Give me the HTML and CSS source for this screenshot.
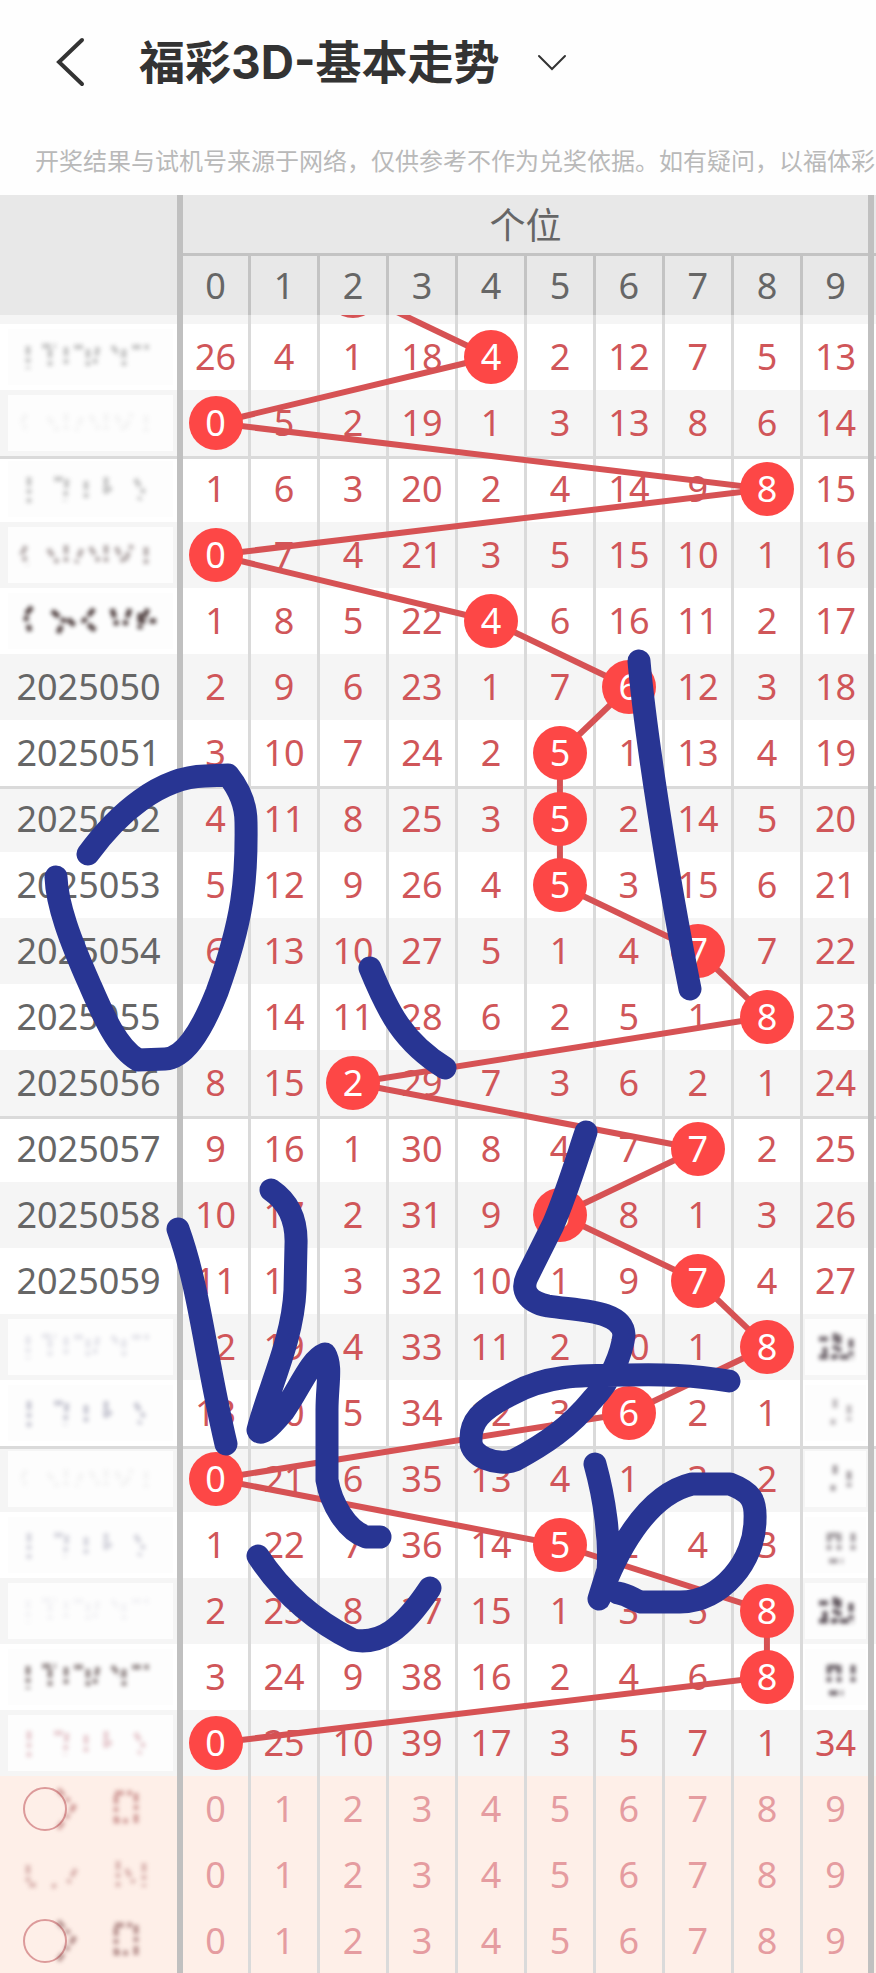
FILE: index.html
```html
<!DOCTYPE html>
<html lang="zh-CN">

<head>
    <meta charset="UTF-8">
    <meta name="viewport" content="width=device-width, initial-scale=1.0">
    <title>福彩3D-基本走势</title>
    <link rel="stylesheet" href="styles.css">
</head>

<body>
    <header class="topbar">
        <button type="button" class="back" aria-label="返回">
            <svg width="32" height="52" viewBox="0 0 32 52"><path d="M27 4 L4 26 L27 48"/></svg>
        </button>
        <h1>福彩3D-基本走势</h1>
        <button type="button" class="more" aria-label="切换走势">
            <svg width="32" height="20" viewBox="0 0 32 20"><path d="M4 4 L17 17 L30 4"/></svg>
        </button>
    </header>
    <p class="notice">开奖结果与试机号来源于网络，仅供参考不作为兑奖依据。如有疑问，以福体彩</p>

    <main class="chart" id="chart">
        <table>
            <colgroup>
                <col class="col-issue">
                <col class="col-first">
                <col span="8">
                <col class="col-last">
                <col class="col-next">
            </colgroup>
            <thead>
                <tr class="head-group">
                    <th rowspan="2" class="issue" aria-label="期号"></th>
                    <th colspan="10" class="last">个位</th>
                    <th></th>
                </tr>
                <tr class="head-num" id="headNum"></tr>
            </thead>
            <tbody id="rows"></tbody>
        </table>
        <svg class="lines" id="lines" aria-hidden="true"></svg>
        <svg class="pen" viewBox="0 195 876 1778" preserveAspectRatio="none" aria-hidden="true">
            <path d="M88 854 C118 813 160 777 205 776 L228 775 C240 790 246 805 246 822 C247 880 243 920 217 992 C200 1035 183 1058 165 1059 L138 1060 C117 1048 103 1015 90 985 C70 940 57 905 56 877"/>
            <path d="M639 661 C645 730 668 880 690 989"/>
            <path d="M370 968 C388 1012 403 1042 445 1068"/>
            <path d="M178 1229 C200 1290 205 1355 226 1444"/>
            <path d="M271 1190 C290 1203 297 1222 296 1245 L295 1290 C293 1340 268 1390 258 1430 C260 1436 268 1430 283 1412 C300 1388 310 1360 325 1354 C332 1366 327 1385 327 1410 L327 1480 C331 1503 346 1530 366 1537 L380 1537"/>
            <path d="M258 1556 C283 1594 315 1621 353 1640 C380 1645 402 1630 430 1588"/>
            <path d="M586 1132 C575 1165 566 1195 553 1225 L527 1277 C521 1290 527 1302 548 1306 C580 1311 623 1310 624 1335 C622 1352 612 1380 592 1400 C570 1427 545 1444 515 1460 C497 1467 470 1456 471 1441 C470 1422 480 1410 510 1395 C545 1375 580 1375 625 1375 C665 1374 690 1375 729 1381"/>
            <path d="M595 1464 C605 1500 610 1540 608 1570 L599 1599 C615 1555 645 1495 692 1484 L730 1484 C751 1492 756 1500 755 1520 C755 1560 722 1602 680 1602 L641 1602 C633 1600 630 1595 618 1593"/>
        </svg>
    </main>

    <script src="chart.js"></script>
</body>

</html>
```

FILE: styles.css
```css
* {
    box-sizing: border-box;
}

body {
    font-family: "Noto Sans", "Noto Sans CJK SC", sans-serif;
    background-color: #fefefe;
    color: #666;
    margin: 0;
}

.topbar {
    display: flex;
    align-items: center;
    height: 124px;
    padding-left: 55px;
}

.topbar button {
    display: flex;
    padding: 0;
    border: none;
    background: none;
    cursor: pointer;
}

.topbar svg {
    fill: none;
    stroke: #333;
    stroke-width: 4;
    stroke-linecap: round;
}

.topbar .more svg {
    stroke-width: 2;
}

h1 {
    margin: 0 36px 0 52px;
    font-family: Inter, "Noto Sans CJK SC", sans-serif;
    font-size: 46px;
    line-height: 60px;
    font-weight: 700;
    color: #333;
}

.notice {
    margin: 0;
    padding-left: 35px;
    font-family: "Noto Sans CJK SC", sans-serif;
    font-size: 24px;
    line-height: 71px;
    color: #b9b9b9;
    white-space: nowrap;
    overflow: hidden;
}

.chart {
    position: relative;
}

table {
    width: 100%;
    table-layout: fixed;
    border-collapse: separate;
    border-spacing: 0;
}

.col-issue {
    width: 183px;
}

.col-first {
    width: 68px;
}

.col-last {
    width: 71px;
}

.col-next {
    width: 2px;
}

th,
td {
    padding: 0;
    font-size: 36px;
    line-height: 48px;
    font-weight: 400;
    text-align: center;
    border-right: 3px solid #dadada;
}

.issue,
.last {
    border-right: 6px solid #c0c0c0;
}

th:last-child,
td:last-child {
    border-right: none;
}

thead th {
    background-color: #e8e8e8;
    border-right-color: #c3c3c3;
}

.head-group th {
    height: 61px;
    box-shadow: inset 0 -3px #c3c3c3;
}

.head-group .issue {
    box-shadow: none;
}

.head-num th {
    height: 59px;
}

tbody tr {
    background-color: #fff;
    color: #d05659;
}

tbody th,
tbody td {
    height: 66px;
}

tbody th {
    color: #666;
}

tbody tr.odd {
    background-color: #f5f5f5;
}

tbody tr.peek th,
tbody tr.peek td {
    height: 9px;
}

tbody tr:last-child th,
tbody tr:last-child td {
    height: 65px;
}

tr.divide th,
tr.divide td {
    box-shadow: inset 0 3px #dadada;
}

tbody tr.guess {
    background-color: #feefe8;
    color: #e59ca0;
}

.ball {
    position: relative;
    z-index: 2;
    display: block;
    width: 54px;
    height: 54px;
    margin: 0 auto;
    border-radius: 50%;
    line-height: 54px;
    background-color: #fd4746;
    color: #fff;
}

.lines,
.pen {
    position: absolute;
    left: 0;
    width: 100%;
    pointer-events: none;
}

.lines {
    z-index: 1;
    overflow: hidden;
}

.lines line {
    stroke: #d65254;
    stroke-width: 6;
}

.lines circle {
    fill: #d65254;
}

.pen {
    z-index: 3;
    top: 0;
    height: 100%;
    fill: none;
    stroke: #283593;
    stroke-width: 23;
    stroke-linecap: round;
    stroke-linejoin: round;
}

/* masked issue numbers and values */
.mask {
    display: block;
    height: 56px;
    margin: 0 4px 0 8px;
    background-color: #fdfdfd;
}

td .mask {
    margin: 0 2px;
}

.guess .mask {
    background: none;
}

.mask svg {
    display: block;
    width: 100%;
    height: 56px;
    fill: none;
}

.mask .blot {
    stroke: currentColor;
    stroke-width: 5;
    stroke-dasharray: 9 3 5 4;
    filter: blur(2px);
}

.mask .ring {
    stroke: #dc9a9a;
    stroke-width: 2;
}
```

FILE: chart.js
```js
const hits = [4, 0, 8, 0, 4, 6, 5, 5, 5, 7, 8, 2, 7, 5, 7, 8, 6, 0, 5, 8, 8, 0];
const misses = [25, 3, 0, 17, 0, 1, 11, 6, 4, 12];
const firstIssue = 2025045;
const dividers = [2, 7, 12, 17];
const blankCell = { row: 10, col: 0 };

// masked rows: strength and tone of the blot in the issue column
const masked = {
    0: [0.4, '#777', 0], 1: [0.06, '#777', 2], 2: [0.4, '#777', 1], 3: [0.45, '#655', 2], 4: [0.95, '#433', 3],
    15: [0.15, '#668', 0], 16: [0.3, '#557', 1], 17: [0.06, '#777', 2], 18: [0.22, '#557', 1],
    19: [0.06, '#668', 0], 20: [0.6, '#544', 0], 21: [0.25, '#a45', 1],
    22: [0.5, '#a55', 4], 23: [0.4, '#a66', 5], 24: [0.6, '#855', 4]
};
const maskedLast = { 15: [0.8, 0], 16: [0.35, 1], 17: [0.5, 1], 18: [0.5, 2], 19: [0.9, 0], 20: [0.8, 2] };

const blots = [
    'M20 17V40M34 17h14M42 20V39M58 18V38M66 18h10M80 20V38M90 18l-4 20M104 17l8 10M116 20V38M124 18h20',
    'M21 16V42M46 18h12M59 18l-2 22M78 20V38M98 16V36M95 28h12M127 18l8 12l-4 9',
    'M18 19l-4 8l6 11M40 22l10 14M58 18V38M74 22l-6 14M82 20l10 16M98 18V38M108 20l8 16l8 -18M138 20V38',
    'M24 14L17 22L22 38M44 18l12 10l-6 12M60 26l8 8M86 16l-10 12l12 10M104 16l6 20M122 16l-6 18M132 20v16M140 16l-6 12h14',
    'M50 8l16 18l-16 22M107 12h20M108 14V40h14M128 12V44',
    'M20 18V38h8M44 38l4 2M68 22l-8 14M110 14V40M118 22l8 14M136 16V40'
];
const lastBlots = [
    'M14 20h10M14 38h34M30 14V40M34 16V38M46 20v16M20 28v8',
    'M30 14V26M28 34v6M44 20V36',
    'M24 16v20M34 16v20M24 18h10M24 44h14M48 16v18'
];

function blot(d, opacity, color, width, ring) {
    const circle = ring ? '<circle class="ring" cx="37" cy="28" r="21"/>' : '';
    return `<span class="mask" aria-hidden="true"><svg viewBox="0 0 ${width} 56">${circle}
        <path class="blot" d="${d}" opacity="${opacity}" color="${color}"/></svg></span>`;
}

const tbody = document.getElementById('rows');

function addRow(className, head, cells) {
    const tr = document.createElement('tr');
    tr.className = className;
    tr.innerHTML = `<th class="issue" scope="row">${head}</th>` +
        cells.map((c, i) => `<td${i === 9 ? ' class="last"' : ''}>${c}</td>`).join('') + '<td></td>';
    tbody.appendChild(tr);
}

document.getElementById('headNum').innerHTML =
    misses.map((m, i) => `<th scope="col"${i === 9 ? ' class="last"' : ''}>${i}</th>`).join('') + '<th></th>';

// lower edge of the row that is scrolled under the header
addRow('peek odd', '', Array(10).fill(''));

hits.forEach((hit, row) => {
    const cells = misses.map((m, i) => {
        misses[i] = i === hit ? 0 : m + 1;
        if (i === hit) return `<span class="ball">${i}</span>`;
        if (row === blankCell.row && i === blankCell.col) return '';
        if (i === 9 && maskedLast[row]) {
            const [opacity, shape] = maskedLast[row];
            return blot(lastBlots[shape], opacity, '#534850', 61);
        }
        return misses[i];
    });
    const m = masked[row];
    const head = m ? blot(blots[m[2]], m[0], m[1], 165) : firstIssue + row;
    const names = [row % 2 ? 'odd' : '', dividers.includes(row) ? 'divide' : ''];
    addRow(names.join(' ').trim(), head, cells);
});

for (let row = 22; row < 25; row++) {
    const m = masked[row];
    addRow('guess', blot(blots[m[2]], m[0], m[1], 165, row !== 23), [0, 1, 2, 3, 4, 5, 6, 7, 8, 9]);
}

// join the drawn numbers, starting from the hidden row above
function drawLines() {
    const svg = document.getElementById('lines');
    const box = tbody.getBoundingClientRect();
    const chart = document.getElementById('chart').getBoundingClientRect();
    svg.style.top = (box.top - chart.top) + 'px';
    svg.style.height = box.height + 'px';

    const col2 = tbody.rows[0].cells[3].getBoundingClientRect();
    const points = [[col2.left + 33 - box.left, -24]];
    document.querySelectorAll('.ball').forEach(ball => {
        const r = ball.getBoundingClientRect();
        points.push([r.left + r.width / 2 - box.left, r.top + r.height / 2 - box.top]);
    });

    let out = `<circle cx="${points[0][0]}" cy="${points[0][1]}" r="27"/>`;
    for (let i = 1; i < points.length; i++) {
        const [x1, y1] = points[i - 1];
        const [x2, y2] = points[i];
        out += `<line x1="${x1}" y1="${y1}" x2="${x2}" y2="${y2}"/>`;
    }
    svg.innerHTML = out;
}

drawLines();
window.addEventListener('resize', drawLines);
```
